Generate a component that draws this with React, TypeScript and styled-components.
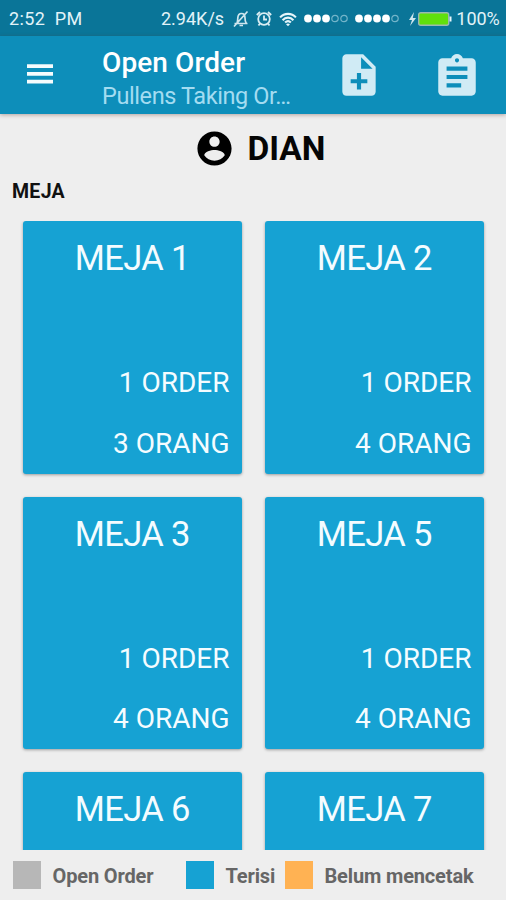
import React from 'react';
import styled, { createGlobalStyle } from 'styled-components';

const GlobalStyle = createGlobalStyle`
  * { box-sizing: border-box; }
  body { margin: 0; background: #eeeeee; font-family: Roboto, 'Liberation Sans', sans-serif; }
`;

const Screen = styled.div`
  width: 506px;
  height: 900px;
  display: flex;
  flex-direction: column;
  overflow: hidden;
  background: #eeeeee;
`;

const StatusBar = styled.div`
  height: 36px;
  flex: none;
  display: flex;
  align-items: center;
  padding: 1px 8px 0 9px;
  background: #0a7598;
  color: #e2f3f8;
`;

const StatusText = styled.span<{ $width: number; $spacing?: number }>`
  width: ${(p) => p.$width}px;
  flex: none;
  white-space: pre;
  font-size: 18px;
  line-height: 36px;
  letter-spacing: ${(p) => p.$spacing ?? 0}px;
`;

const Clock = styled(StatusText)`
  margin-right: auto;
`;

const StatusIcon = styled.svg<{ $gap: number }>`
  flex: none;
  display: block;
  margin-left: ${(p) => p.$gap}px;
`;

const Toolbar = styled.header`
  position: relative;
  height: 78px;
  flex: none;
  display: flex;
  padding: 0 23px 0 27px;
  background: #0d8eba;
  box-shadow: 0 1px 4px rgba(90, 50, 40, 0.4);
`;

const MenuButton = styled.button`
  width: 75px;
  padding: 1px 0 0;
  border: 0;
  background: none;
  text-align: left;
`;

const Titles = styled.div`
  width: 232px;
  padding-top: 10px;
`;

const Title = styled.h1`
  margin: 0;
  font-size: 28px;
  line-height: 33px;
  font-weight: 500;
  letter-spacing: 0.1px;
  color: #ffffff;
`;

const Subtitle = styled.div`
  font-size: 23.5px;
  line-height: 34px;
  letter-spacing: -0.4px;
  white-space: nowrap;
  color: #a3dcf1;
`;

const ToolButton = styled.button<{ $top: number; $gap?: number }>`
  width: 50px;
  height: 50px;
  padding: 0;
  margin: ${(p) => p.$top}px 0 0 ${(p) => p.$gap ?? 0}px;
  border: 0;
  background: none;
  svg { display: block; }
`;

const UserRow = styled.div`
  height: 70px;
  flex: none;
  display: flex;
  align-items: center;
  padding-left: 193.5px;
  svg { margin-top: -2px; }
`;

const UserName = styled.span`
  margin-left: 13px;
  font-size: 33.5px;
  line-height: 70px;
  font-weight: 700;
  color: #050505;
`;

const SectionLabel = styled.h2`
  margin: 0;
  height: 37px;
  flex: none;
  padding-left: 12px;
  font-size: 19.5px;
  line-height: 16px;
  font-weight: 700;
  letter-spacing: 0.3px;
  color: #111111;
`;

const TableGrid = styled.main`
  height: 628.5px;
  flex: none;
  overflow: hidden;
  display: grid;
  grid-template-columns: 219px 219px;
  grid-auto-rows: 252.5px;
  gap: 23px;
  padding: 0 22px 0 23px;
`;

const Card = styled.article`
  display: flex;
  flex-direction: column;
  padding: 11px 12.5px 0 12px;
  border-radius: 3px;
  background: #16a2d3;
  box-shadow: 0 1px 3px rgba(0, 0, 0, 0.35);
  color: #f4fcff;
`;

const CardTitle = styled.h3`
  flex: none;
  margin: 0 0 74px;
  text-align: center;
  font-size: 34.5px;
  line-height: 52px;
  font-weight: 400;
  letter-spacing: -0.6px;
`;

const CardLine = styled.div`
  flex: none;
  height: 60.5px;
  text-align: right;
  font-size: 28px;
  line-height: 50px;
`;

const Legend = styled.footer`
  flex: 1;
  display: flex;
  align-items: center;
  padding-left: 13px;
`;

const LegendItem = styled.div<{ $width: number }>`
  width: ${(p) => p.$width}px;
  flex: none;
  display: flex;
  align-items: center;
  white-space: nowrap;
  font-size: 20px;
  line-height: 28px;
  font-weight: 700;
  letter-spacing: -0.15px;
  color: #666666;
`;

const LegendLabel = styled.span`
  padding-top: 2px;
`;

const Swatch = styled.span<{ $color: string }>`
  width: 28px;
  height: 28px;
  margin-right: 11.5px;
  background: ${(p) => p.$color};
`;

type Table = { name: string; orders?: number; people?: number };

const tables: Table[] = [
  { name: 'MEJA 1', orders: 1, people: 3 },
  { name: 'MEJA 2', orders: 1, people: 4 },
  { name: 'MEJA 3', orders: 1, people: 4 },
  { name: 'MEJA 5', orders: 1, people: 4 },
  { name: 'MEJA 6' },
  { name: 'MEJA 7' },
];

const legend = [
  { label: 'Open Order', color: '#b7b7b7', width: 173 },
  { label: 'Terisi', color: '#16a2d3', width: 99 },
  { label: 'Belum mencetak', color: '#ffb253', width: 200 },
];

function SignalDots({ filled, gap }: { filled: number; gap: number }) {
  return (
    <StatusIcon $gap={gap} width="44" height="10" viewBox="0 0 44 10">
      {[0, 1, 2, 3, 4].map((i) =>
        i < filled ? (
          <circle key={i} cx={4 + i * 9} cy="4.500" r="3.9" fill="#ffffff" />
        ) : (
          <circle key={i} cx={4 + i * 9} cy="4.500" r="3.2" fill="none" stroke="#73b4c9" strokeWidth="1.2" />
        ),
      )}
    </StatusIcon>
  );
}

export default function App() {
  return (
    <>
      <GlobalStyle />
      <Screen>
        <StatusBar>
          <Clock $width={80} $spacing={0.35}>2:52  PM</Clock>
          <StatusText $width={64}>2.94K/s</StatusText>
          <StatusIcon $gap={8} width="16" height="18" viewBox="0 0 16 18" fill="none" stroke="#cfe6ee" strokeWidth="1.700">
            <path d="M1.500 13.500h13M4 13c.8-1.500.6-3 .8-5C5 4.700 6.500 3.500 8.500 3.500S12 5 12 8s.2 3.500 1.200 5M6.500 15.500h3.500M14.500 1.500L1 16.500" />
          </StatusIcon>
          <StatusIcon $gap={7} width="16" height="16" viewBox="0 0 16 16" fill="none" stroke="#d9edf3" strokeWidth="1.800">
            <circle cx="8" cy="8" r="5.800" />
            <path d="M8 4.500v4h3M.8 4L4 1M12 1l3.200 3M4 12.500l-1.500 2M12 12.500l1.500 2" />
          </StatusIcon>
          <StatusIcon $gap={7} width="18" height="16" viewBox="0 0 20 16" fill="none" stroke="#e5f5fa" strokeWidth="2.400">
            <path d="M1.200 6.200C6 1 14 1 18.800 6.200M4 9.300c3.400-3.700 8.600-3.700 12 0M6.800 12c2-2 4.400-2 6.400 0" />
            <path d="M10 16l-2.200-2.300c1.300-1.100 3.100-1.100 4.400 0z" fill="#e5f5fa" stroke="none" />
          </StatusIcon>
          <SignalDots filled={3} gap={7} />
          <SignalDots filled={4} gap={7} />
          <StatusIcon $gap={9} width="44" height="16" viewBox="0 0 44 16">
            <path d="M6 1L1 9h3l-2 6 6-8H4.800z" fill="#cfe6ee" />
            <rect x="10.700" y="1.700" width="30" height="12.600" rx="2" fill="#60e00c" stroke="#9cb9b0" strokeWidth="1.400" />
            <rect x="41.500" y="5.500" width="2" height="5" fill="#e5f5fa" />
          </StatusIcon>
          <StatusText $width={46} $spacing={-0.1}> 100%</StatusText>
        </StatusBar>

        <Toolbar>
          <MenuButton aria-label="Menu">
            <svg width="26" height="20" viewBox="0 0 26 20" fill="#f5fbfd">
              <path d="M0 .3h26v3.700H0zM0 8h26v3.700H0zM0 15.700h26v3.700H0z" />
            </svg>
          </MenuButton>
          <Titles>
            <Title>Open Order</Title>
            <Subtitle>Pullens Taking Or…</Subtitle>
          </Titles>
          <ToolButton $top={14} aria-label="Add order">
            <svg width="50" height="50" viewBox="0 0 24 24" fill="#d0ebf5">
              <path d="M14 2H6c-1.100 0-1.990.9-1.990 2L4 20c0 1.100.89 2 1.990 2H18c1.100 0 2-.9 2-2V8l-6-6zm2 14h-3v3h-2v-3H8v-2h3v-3h2v3h3v2zm-3-7V3.500L18.500 9H13z" />
            </svg>
          </ToolButton>
          <ToolButton $top={16} $gap={48} aria-label="Order list">
            <svg width="50" height="50" viewBox="0 0 24 24" fill="#d0ebf5">
              <path d="M19 3h-4.180C14.400 1.840 13.300 1 12 1c-1.300 0-2.400.84-2.820 2H5c-1.100 0-2 .9-2 2v14c0 1.100.9 2 2 2h14c1.100 0 2-.9 2-2V5c0-1.100-.9-2-2-2zm-7 0c.55 0 1 .45 1 1s-.45 1-1 1-1-.45-1-1 .45-1 1-1zm2 14H7v-2h7v2zm3-4H7v-2h10v2zm0-4H7V7h10v2z" />
            </svg>
          </ToolButton>
        </Toolbar>

        <UserRow>
          <svg width="41" height="41" viewBox="0 0 24 24" fill="#000000">
            <path d="M12 2C6.480 2 2 6.480 2 12s4.480 10 10 10 10-4.480 10-10S17.520 2 12 2zm0 3c1.660 0 3 1.340 3 3s-1.340 3-3 3-3-1.340-3-3 1.340-3 3-3zm0 14.200c-2.500 0-4.710-1.280-6-3.220.03-1.990 4-3.080 6-3.080 1.990 0 5.970 1.090 6 3.080-1.290 1.940-3.500 3.220-6 3.220z" />
          </svg>
          <UserName>DIAN</UserName>
        </UserRow>
        <SectionLabel>MEJA</SectionLabel>

        <TableGrid>
          {tables.map((t) => (
            <Card key={t.name}>
              <CardTitle>{t.name}</CardTitle>
              {t.orders !== undefined && <CardLine>{t.orders} ORDER</CardLine>}
              {t.people !== undefined && <CardLine>{t.people} ORANG</CardLine>}
            </Card>
          ))}
        </TableGrid>

        <Legend>
          {legend.map((l) => (
            <LegendItem key={l.label} $width={l.width}>
              <Swatch $color={l.color} />
              <LegendLabel>{l.label}</LegendLabel>
            </LegendItem>
          ))}
        </Legend>
      </Screen>
    </>
  );
}
